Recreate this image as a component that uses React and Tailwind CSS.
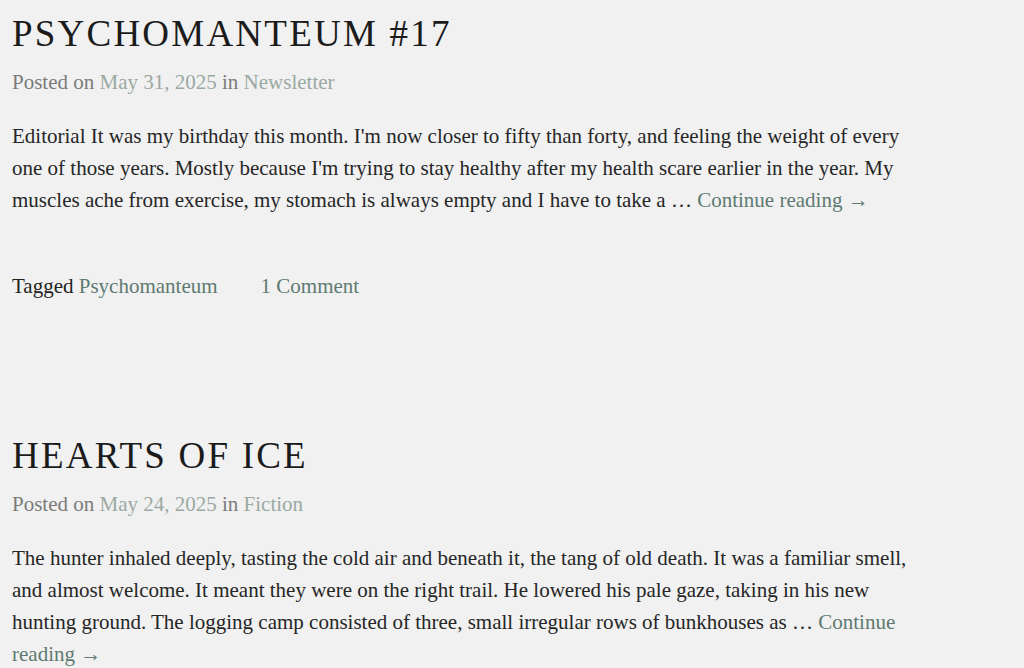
export default function App() {
  const posts = [
    {
      title: "Psychomanteum #17",
      date: "May 31, 2025",
      category: "Newsletter",
      excerpt:
        "Editorial It was my birthday this month. I'm now closer to fifty than forty, and feeling the weight of every one of those years. Mostly because I'm trying to stay healthy after my health scare earlier in the year. My muscles ache from exercise, my stomach is always empty and I have to take a …",
      tag: "Psychomanteum",
      comments: "1 Comment",
    },
    {
      title: "Hearts of Ice",
      date: "May 24, 2025",
      category: "Fiction",
      excerpt:
        "The hunter inhaled deeply, tasting the cold air and beneath it, the tang of old death. It was a familiar smell, and almost welcome. It meant they were on the right trail. He lowered his pale gaze, taking in his new hunting ground. The logging camp consisted of three, small irregular rows of bunkhouses as …",
    },
  ];

  return (
    <div className="min-h-screen bg-[#f1f1f1] font-['Liberation_Serif',serif] text-[#222]">
      <main className="pl-3 pr-[90px] pt-[10px]">
        {posts.map((post, i) => (
          <article key={i} className={i > 0 ? "mt-[130px]" : ""}>
            <h2 className="text-[37px] leading-[48px] uppercase tracking-[0.06em] text-[#1b1b1b]">
              {post.title}
            </h2>
            <div className="mt-[11px] text-[21px] leading-[26px] text-[#7b7b7b]">
              Posted on <a className="text-[#9aa9a2]">{post.date}</a> in{" "}
              <a className="text-[#9aa9a2]">{post.category}</a>
            </div>
            <p className="mt-[25px] max-w-[925px] text-[21px] leading-[32px] text-[#262626]">
              {post.excerpt}{" "}
              <a className="text-[#5e7a72]">Continue reading&nbsp;→</a>
            </p>
            {post.tag && (
              <div className="mt-[54px] flex text-[21px] leading-[32px]">
                <span>
                  Tagged <a className="text-[#5e7a72]">{post.tag}</a>
                </span>
                <a className="ml-[43px] text-[#5e7a72]">{post.comments}</a>
              </div>
            )}
          </article>
        ))}
      </main>
    </div>
  );
}
